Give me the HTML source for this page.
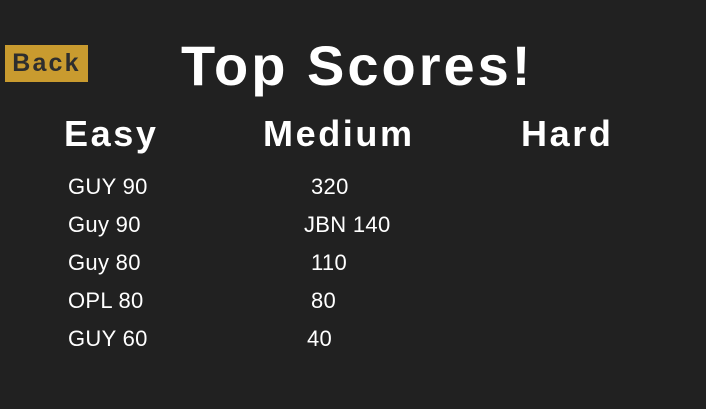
<!DOCTYPE html>
<html><head><style>
body{margin:0;width:706px;height:409px;background:#212121;font-family:"Liberation Sans",sans-serif;color:#fff;position:relative;overflow:hidden}
.a{position:absolute;white-space:nowrap}
.back{left:5px;top:45px;width:83px;height:37px;background:#c99b2f;color:#2e2e2e;font-weight:bold;font-size:25px;letter-spacing:2.2px;line-height:37px;text-align:center}
.t{top:33px;left:181px;font-size:56px;letter-spacing:3px;font-weight:bold}
.h{top:113px;font-size:36px;font-weight:bold;letter-spacing:2.6px}
.r{font-size:22px;line-height:22px;letter-spacing:0.3px}
</style></head><body>
<div class="a back">Back</div>
<div class="a t">Top Scores!</div>
<div class="a h" style="left:64px">Easy</div>
<div class="a h" style="left:263px">Medium</div>
<div class="a h" style="left:521px">Hard</div>
<div class="a r" style="left:68px;top:176px">GUY 90</div>
<div class="a r" style="left:68px;top:214px">Guy 90</div>
<div class="a r" style="left:68px;top:252px">Guy 80</div>
<div class="a r" style="left:68px;top:290px">OPL 80</div>
<div class="a r" style="left:68px;top:328px">GUY 60</div>
<div class="a r" style="left:311px;top:176px">320</div>
<div class="a r" style="left:304px;top:214px">JBN 140</div>
<div class="a r" style="left:311px;top:252px">110</div>
<div class="a r" style="left:311px;top:290px">80</div>
<div class="a r" style="left:307px;top:328px">40</div>
</body></html>
